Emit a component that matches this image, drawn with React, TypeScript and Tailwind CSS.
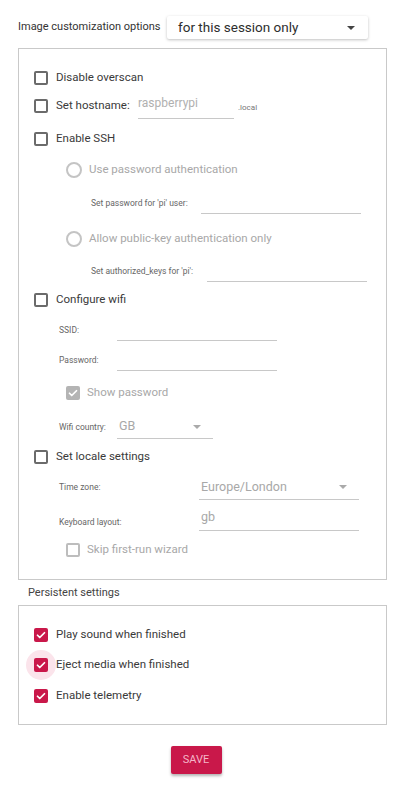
import React from 'react';

const Check: React.FC<{ className?: string }> = ({ className }) => (
  <svg viewBox="0 0 24 24" className={className} fill="none" stroke="currentColor" strokeWidth={3.5} strokeLinecap="round" strokeLinejoin="round">
    <path d="M5 12.5l4.5 4.5L19 7.5" />
  </svg>
);

const Box: React.FC<{ checked?: boolean; tone?: 'pink' | 'gray' | 'dark' | 'light' }> = ({ checked, tone = 'dark' }) => {
  if (checked) {
    const bg = tone === 'pink' ? 'bg-[#c9184a]' : 'bg-[#b4b4b4]';
    return (
      <span className={`flex h-[14px] w-[14px] shrink-0 items-center justify-center rounded-[2px] ${bg}`}>
        <Check className="h-[12px] w-[12px] text-white" />
      </span>
    );
  }
  const border = tone === 'light' ? 'border-[#bdbdbd]' : 'border-[#6b6b6b]';
  return <span className={`block h-[14px] w-[14px] shrink-0 rounded-[2px] border-2 ${border}`} />;
};

const Arrow2: React.FC = () => (
  <span className="block h-0 w-0 border-x-[4px] border-t-[4px] border-x-transparent border-t-[#aaa]" />
);

const CheckRow: React.FC<{ label: string; className?: string }> = ({ label, className = '' }) => (
  <div className={`flex h-[30px] items-center gap-[8px] pl-[15px] ${className}`}>
    <Box />
    <span className="text-[11.5px] text-[#3a3a3a]">{label}</span>
  </div>
);

const Radio: React.FC<{ label: string; className?: string }> = ({ label, className = '' }) => (
  <div className={`flex h-[30px] items-center gap-[7px] pl-[47px] ${className}`}>
    <span className="block h-[16px] w-[16px] shrink-0 rounded-full border-2 border-[#c4c4c4]" />
    <span className="text-[11.5px] text-[#a8a8a8]">{label}</span>
  </div>
);

const Field: React.FC<{ label: string; labelW: string; inputW: string; pl: string; className?: string }> = ({
  label,
  labelW,
  inputW,
  pl,
  className = '',
}) => (
  <div className={`flex items-center ${pl} ${className}`}>
    <span className={`${labelW} shrink-0 text-[8.5px] text-[#666]`}>{label}</span>
    <span className={`block h-[21px] ${inputW} border-b border-[#c8c8c8]`} />
  </div>
);

export default function App() {
  return (
    <div className="min-h-[788px] w-[401px] bg-white font-['Roboto','Liberation_Sans',sans-serif]">
      <div className="flex items-center pl-[18px] pt-[16px]">
        <span className="w-[149px] text-[11px] text-[#333]">Image customization options</span>
        <div className="flex h-[23px] w-[201px] items-center justify-between rounded-[2px] bg-white pl-[11px] pr-[13px] shadow-[0_1px_3px_rgba(0,0,0,0.25)]">
          <span className="text-[13.5px] text-[#2e2e2e]">for this session only</span>
          <span className="block h-0 w-0 border-x-[4px] border-t-[4px] border-x-transparent border-t-[#444]" />
        </div>
      </div>

      <div className="ml-[18px] mt-[9px] w-[369px] border border-[#c9c9c9] pb-[14px] pt-[14px]">
        <CheckRow label="Disable overscan" />

        <div className="flex h-[26px] items-center pl-[15px]">
          <Box />
          <span className="ml-[8px] w-[82px] text-[11.5px] text-[#3a3a3a]">Set hostname:</span>
          <div className="flex h-[25px] w-[96px] items-start border-b border-[#c8c8c8]">
            <span className="text-[12px] text-[#b0b0b0]">raspberrypi</span>
          </div>
          <span className="ml-[4px] mt-[4px] text-[8px] text-[#777]">.local</span>
        </div>

        <CheckRow label="Enable SSH" className="mt-[5px]" />
        <Radio label="Use password authentication" className="mt-[1px]" />
        <Field label="Set password for 'pi' user:" labelW="w-[110px]" inputW="w-[160px]" pl="pl-[72px]" className="mt-[8px]" />
        <Radio label="Allow public-key authentication only" className="mt-[10px]" />
        <Field label="Set authorized_keys for 'pi':" labelW="w-[116px]" inputW="w-[160px]" pl="pl-[72px]" className="mt-[7px]" />

        <CheckRow label="Configure wifi" className="mt-[3px]" />
        <Field label="SSID:" labelW="w-[58px]" inputW="w-[160px]" pl="pl-[40px]" className="mt-[5px]" />
        <Field label="Password:" labelW="w-[58px]" inputW="w-[160px]" pl="pl-[40px]" className="mt-[9px]" />
        <div className="mt-[7px] flex h-[30px] items-center gap-[7px] pl-[47px]">
          <Box checked tone="gray" />
          <span className="text-[11.5px] text-[#a8a8a8]">Show password</span>
        </div>
        <div className="mt-[7px] flex items-center pl-[40px]">
          <span className="w-[58px] shrink-0 text-[8.5px] text-[#666]">Wifi country:</span>
          <div className="flex h-[24px] w-[96px] items-center justify-between border-b border-[#c8c8c8] pl-[2px] pr-[12px]">
            <span className="text-[12.5px] text-[#a8a8a8]">GB</span>
            <Arrow2 />
          </div>
        </div>

        <CheckRow label="Set locale settings" className="mt-[3px]" />
        <div className="mt-[3px] flex items-center pl-[40px]">
          <span className="w-[140px] shrink-0 text-[8.5px] text-[#666]">Time zone:</span>
          <div className="flex h-[25px] w-[160px] items-center justify-between border-b border-[#c8c8c8] pl-[2px] pr-[12px]">
            <span className="text-[12.5px] text-[#a8a8a8]">Europe/London</span>
            <Arrow2 />
          </div>
        </div>
        <div className="mt-[9px] flex items-center pl-[40px]">
          <span className="mt-[4px] w-[140px] shrink-0 text-[8.5px] text-[#666]">Keyboard layout:</span>
          <div className="flex h-[22px] w-[160px] items-start border-b border-[#c8c8c8] pl-[2px]">
            <span className="text-[12.5px] leading-[16px] text-[#a8a8a8]">gb</span>
          </div>
        </div>
        <div className="mt-[4px] flex h-[30px] items-center gap-[7px] pl-[47px]">
          <Box tone="light" />
          <span className="text-[11.5px] text-[#a8a8a8]">Skip first-run wizard</span>
        </div>
      </div>

      <div className="mt-[6px] pl-[28px] text-[11px] leading-[14px] text-[#444]">Persistent settings</div>

      <div className="ml-[18px] mt-[5px] w-[369px] border border-[#c9c9c9] pb-[13px] pt-[14px]">
        <div className="flex h-[30px] items-center gap-[8px] pl-[15px]">
          <Box checked tone="pink" />
          <span className="text-[11.5px] text-[#3a3a3a]">Play sound when finished</span>
        </div>
        <div className="flex h-[30px] items-center gap-[8px] pl-[15px]">
          <span className="relative flex h-[14px] w-[14px] items-center justify-center">
            <span className="absolute left-[-8px] top-[-8px] h-[30px] w-[30px] rounded-full bg-[#fbe4eb]" />
            <span className="relative">
              <Box checked tone="pink" />
            </span>
          </span>
          <span className="relative text-[11.5px] text-[#3a3a3a]">Eject media when finished</span>
        </div>
        <div className="mt-[1px] flex h-[30px] items-center gap-[8px] pl-[15px]">
          <Box checked tone="pink" />
          <span className="text-[11.5px] text-[#3a3a3a]">Enable telemetry</span>
        </div>
      </div>

      <div className="mt-[21px] flex justify-center pr-[9px]">
        <button className="flex h-[28px] w-[51px] items-center justify-center rounded-[2px] bg-[#c9184a] text-[11px] text-[#f4b6c8] shadow-[0_2px_3px_rgba(0,0,0,0.3)]">
          SAVE
        </button>
      </div>
    </div>
  );
}
